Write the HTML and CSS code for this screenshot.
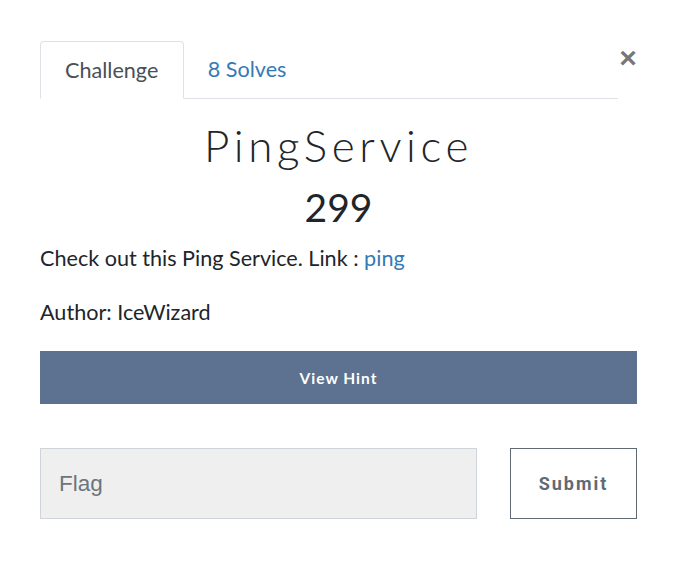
FILE: index.html
```html
<!DOCTYPE html>
<html>
<head>
<meta charset="utf-8">
<link rel="stylesheet" href="styles.css">
</head>
<body>
<div class="modal">
  <div class="head">
    <ul class="tabs">
      <li class="tab active">Challenge</li>
      <li class="tab link">8 Solves</li>
    </ul>
    <button class="close">&times;</button>
  </div>
  <h2 class="title">PingService</h2>
  <h3 class="value">299</h3>
  <p class="desc">Check out this Ping Service. Link : <a href="#">ping</a></p>
  <p class="desc author">Author: IceWizard</p>
  <button class="hint">View Hint</button>
  <div class="submit-row">
    <input class="flag" type="text" placeholder="Flag">
    <button class="submit">Submit</button>
  </div>
</div>
</body>
</html>
```
FILE: styles.css
```css
html, body { margin: 0; padding: 0; background: #fff; }
body { font-family: "Lato", "Liberation Sans", sans-serif; color: #212529; }
.modal { padding: 41px 36px 0 40px; }
.head { display: flex; align-items: flex-start; }
.tabs {
  list-style: none; margin: 0; padding: 0; display: flex; flex-shrink: 0;
  width: 578px; border-bottom: 1px solid #dee2e6; height: 57px;
}
.tab { font-size: 21.6px; line-height: 24px; padding: 16px 24px 17px 24px; }
.tab.active {
  color: #495057; border: 1px solid #dee2e6; border-bottom-color: #fff;
  border-radius: 4px 4px 0 0; background: #fff; height: 23px; margin-bottom: -1px;
  padding-right: 24.5px;
}
.tab.link { color: #337ab7; }
.close {
  background: none; border: 0; padding: 0; margin: 2px 0 0 1px;
  font-family: "Liberation Sans", sans-serif; font-weight: bold;
  font-size: 30px; line-height: 30px; color: #777; width: 20px;
}
.title {
  margin: 19px 0 0 0; text-align: center; font-family: "Lato", sans-serif;
  font-weight: 300; font-size: 44px; line-height: 54px; letter-spacing: 4.6px; color: #212529;
}
.value {
  margin: 12px 0 0 0; text-align: center; font-weight: 400; font-size: 39px; line-height: 46px;
}
.desc { margin: 13px 0 0 0; font-size: 21.6px; line-height: 30px; }
.desc a { color: #337ab7; text-decoration: none; }
.author { margin-top: 24px; }
.hint {
  display: block; width: 597px; height: 53px; margin-top: 24px;
  background: #5c7290; color: #fff; border: 0;
  font-family: "Lato", sans-serif; font-weight: bold; font-size: 15.5px; letter-spacing: 1px;
}
.submit-row { display: flex; gap: 33px; margin-top: 44px; }
.flag {
  width: 437px; height: 71px; box-sizing: border-box; background: #efefef;
  border: 1px solid #ced4da; padding: 0 18px; font-family: "Liberation Sans", sans-serif;
  font-size: 22.5px; color: #495057; margin: 0;
}
.flag::placeholder { color: #6c757d; }
.submit {
  width: 127px; height: 71px; box-sizing: border-box; background: #fff;
  border: 1px solid #5f6a75; color: #5f6a75; font-family: "Roboto", sans-serif;
  font-weight: bold; font-size: 18px; letter-spacing: 2px; margin: 0;
}
```
